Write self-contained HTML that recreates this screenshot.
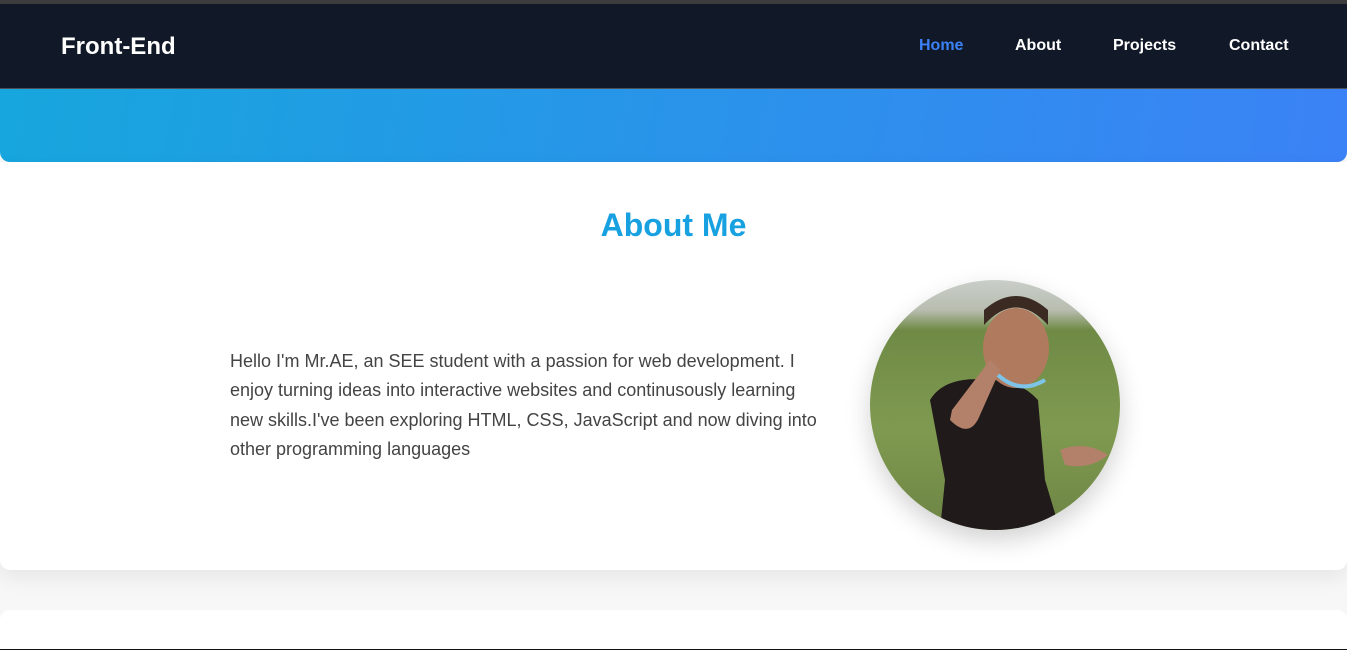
<!DOCTYPE html>
<html><head><meta charset="utf-8"><style>
*{margin:0;padding:0;box-sizing:border-box}
body{width:1347px;height:650px;overflow:hidden;background:#f7f7f7;font-family:"Liberation Sans",Arial,sans-serif;position:relative}
.top{position:absolute;top:0;left:0;width:1347px;height:4px;background:#3c3c3c}
nav{position:absolute;top:4px;left:0;width:1347px;height:85px;background:#111827;border-bottom:1px solid #4b5058}
.logo{position:absolute;left:61px;top:29px;color:#fff;font-weight:bold;font-size:24px}
.links a{position:absolute;top:33px;color:#fff;font-weight:bold;font-size:16px;text-decoration:none}
.hero{position:absolute;top:89px;left:0;width:1347px;height:73px;background:linear-gradient(100deg,#17a6dd,#3b82f6);border-radius:0 0 10px 10px}
.card{position:absolute;top:162px;left:0;width:1347px;height:408px;background:#fff;border-radius:0 0 10px 10px;box-shadow:0 8px 20px rgba(0,0,0,.07)}
h2{position:absolute;top:207px;left:0;width:1347px;text-align:center;color:#17a1e0;font-size:32px;font-weight:bold}
p{position:absolute;left:230px;top:347px;width:600px;color:#444;font-size:18px;line-height:29.3px}
.photo{position:absolute;left:870px;top:280px;width:250px;height:250px;border-radius:50%;overflow:hidden;box-shadow:0 10px 25px rgba(0,0,0,.18);background:linear-gradient(180deg,#c9cfc9 0%,#b8bdb0 12%,#6f8a45 20%,#7f9a50 60%,#6d8444 100%)}
.card2{position:absolute;top:610px;left:0;width:1347px;height:40px;background:#fff;border-radius:10px 10px 0 0;border-bottom:1px solid #111}
</style></head><body>
<div class="top"></div>
<nav><div class="logo">Front-End</div>
<div class="links"><a style="left:919px;color:#3b82f6">Home</a><a style="left:1015px">About</a><a style="left:1113px">Projects</a><a style="left:1229px">Contact</a></div></nav>
<div class="hero"></div>
<div class="card"></div>
<h2>About Me</h2>
<p>Hello I'm Mr.AE, an SEE student with a passion for web development. I enjoy turning ideas into interactive websites and continusously learning new skills.I've been exploring HTML, CSS, JavaScript and now diving into other programming languages</p>
<div class="photo">
<svg width="250" height="250" viewBox="0 0 250 250">
<path d="M60 120 Q75 95 120 100 Q150 100 168 120 L175 200 L190 250 L70 250 L75 200 Z" fill="#201a1b"/>
<ellipse cx="146" cy="68" rx="33" ry="40" fill="#b07a5e"/>
<path d="M114 45 Q146 10 178 45 L178 30 Q146 2 114 30 Z" fill="#3a2a22"/>
<path d="M82 130 L120 80 L130 90 L110 135 Q100 160 80 140 Z" fill="#b3806a"/>
<path d="M190 170 Q215 160 238 175 Q220 190 195 185 Z" fill="#b3806a"/>
<path d="M128 95 Q150 115 175 100" stroke="#7ec3e8" stroke-width="4" fill="none"/>
</svg></div>
<div class="card2"></div>
</body></html>
